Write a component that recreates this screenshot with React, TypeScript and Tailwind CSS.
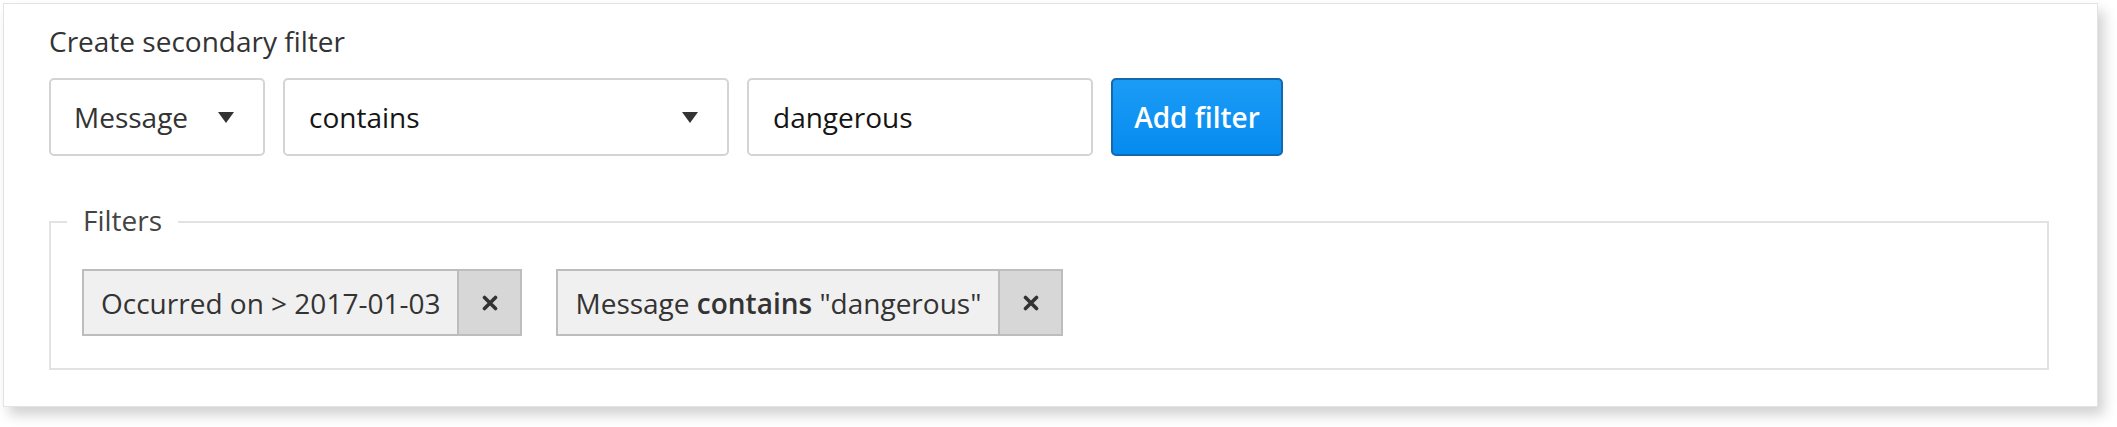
import { Fragment } from 'react'

const Arrow = () => (
  <svg width="16" height="11" viewBox="0 0 16 11" className="shrink-0">
    <path d="M0 0 H16 L8 11 Z" fill="#333" />
  </svg>
)

const chips = [
  { id: 1, parts: [{ text: 'Occurred on > 2017-01-03', bold: false }] },
  {
    id: 2,
    parts: [
      { text: 'Message ', bold: false },
      { text: 'contains', bold: true },
      { text: ' "dangerous"', bold: false },
    ],
  },
]

const App = () => {
  return (
    <div className="bg-white w-[2117px] h-[427px] pt-[3px] pl-[3px] font-['Open_Sans',sans-serif] text-[28px]">
      <div className="w-[2095px] border border-[#e3e3e3] bg-white pl-[45px] pr-[48px] pt-[16px] pb-[36px] shadow-[6px_8px_12px_rgba(0,0,0,0.18)]">
        <h2 className="leading-[42px] text-[#333]">Create secondary filter</h2>

        <div className="flex gap-[18px] mt-[16px] h-[78px]">
          <div className="w-[216px] flex items-center justify-between pl-[23px] pr-[29px] border-2 border-[#d4d4d4] rounded-[5px] text-[#333]">
            <span>Message</span>
            <Arrow />
          </div>
          <div className="w-[446px] flex items-center justify-between pl-[24px] pr-[29px] border-2 border-[#d4d4d4] rounded-[5px] text-[#151515]">
            <span>contains</span>
            <Arrow />
          </div>
          <div className="w-[346px] flex items-center pl-[24px] border-2 border-[#d4d4d4] rounded-[5px] text-[#151515]">
            dangerous
          </div>
          <button className="w-[172px] border-2 border-[#1468ad] rounded-[5px] bg-gradient-to-b from-[#1a9cf6] to-[#058bef] text-white font-semibold">
            Add filter
          </button>
        </div>

        <fieldset className="mt-[45px] border-2 border-[#e2e2e2] px-[16px] pt-[26px] pb-[32px]">
          <legend className="px-[16px] leading-[42px] text-[#444]">
            <span className="relative -top-[2px]">Filters</span>
          </legend>
          <div className="flex gap-[34px] pl-[15px]">
            {chips.map((chip) => (
              <div
                key={chip.id}
                className="flex h-[67px] border-2 border-[#bdbdbd] bg-[#f0f0f0] text-[#333]"
              >
                <div className="flex items-center px-[17px] whitespace-pre">
                  {chip.parts.map((p, i) => (
                    <Fragment key={i}>
                      {p.bold ? <b className="font-semibold">{p.text}</b> : p.text}
                    </Fragment>
                  ))}
                </div>
                <div className="w-[63px] flex items-center justify-center bg-[#d7d7d7] border-l-2 border-[#bdbdbd]">
                  <svg width="16" height="16" viewBox="0 0 16 16">
                    <path d="M2.5 2.5 L13.5 13.5 M13.5 2.5 L2.5 13.5" stroke="#333" strokeWidth="3.6" strokeLinecap="round" />
                  </svg>
                </div>
              </div>
            ))}
          </div>
        </fieldset>
      </div>
    </div>
  )
}

export default App
